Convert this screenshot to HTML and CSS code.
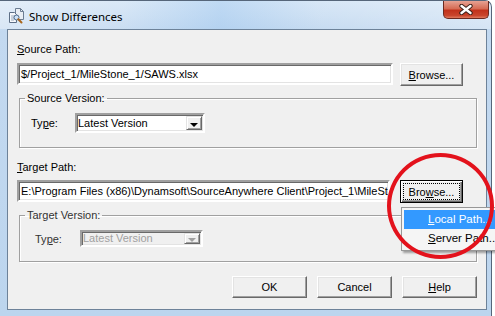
FILE: index.html
```html
<!DOCTYPE html>
<html lang="en">
<head>
  <meta charset="UTF-8">
  <meta name="viewport" content="width=device-width, initial-scale=1.0">
  <title>Show Differences</title>
  <link rel="stylesheet" href="styles.css">
</head>
<body>
  <div class="window">
    <div class="titlebar">
      <svg class="app-icon" width="16" height="16" viewBox="0 0 16 16">
        <!-- back document -->
        <path d="M7.5 0.5h5l3 3v8h-8z" fill="#e9eef4" stroke="#6c7d92"/>
        <path d="M12.5 0.5v3h3" fill="none" stroke="#6c7d92"/>
        <!-- front document -->
        <path d="M1.5 4.5h5l2 2v8h-7z" fill="#f6f8fb" stroke="#5d6f86"/>
        <path d="M3 8h4M3 10h4M3 12h3" stroke="#9aaabd"/>
        <!-- magnifier -->
        <circle cx="8.5" cy="9.5" r="2.5" fill="#cfe3f7" stroke="#4d6b8c"/>
        <path d="M10.3 11.3l3.2 3.2" stroke="#a8661c" stroke-width="2" stroke-linecap="round"/>
      </svg>
      <span class="title">Show Differences</span>
      <div class="close-btn">
        <svg width="14" height="11" viewBox="0 0 14 11">
          <path d="M2.5 2l9 7M11.5 2l-9 7" stroke="#3b2019" stroke-width="4.4" stroke-linecap="round"/>
          <path d="M2.5 2l9 7M11.5 2l-9 7" stroke="#ffffff" stroke-width="2.4" stroke-linecap="round"/>
        </svg>
      </div>
    </div>

    <div class="client">
      <div class="field-label"><u>S</u>ource Path:</div>
      <div class="path-row">
        <div class="textbox source-box">$/Project_1/MileStone_1/SAWS.xlsx</div>
        <button class="btn browse-btn"><u>B</u>rowse...</button>
      </div>

      <fieldset class="group source-group">
        <legend>Source Version:</legend>
        <div class="type-row">
          <span class="type-label">Ty<u>p</u>e:</span>
          <div class="combo">
            <span class="combo-text">Latest Version</span>
            <span class="combo-arrow"></span>
          </div>
        </div>
      </fieldset>

      <div class="field-label target-label"><u>T</u>arget Path:</div>
      <div class="path-row target-row">
        <div class="textbox target-box">E:\Program Files (x86)\Dynamsoft\SourceAnywhere Client\Project_1\MileStone_1\SAWS.xlsx</div>
        <button class="btn browse-btn default-btn"><span class="focus-ring">Bro<u>w</u>se...</span></button>
      </div>

      <fieldset class="group target-group disabled">
        <legend>Target Version:</legend>
        <div class="type-row">
          <span class="type-label">Ty<u>p</u>e:</span>
          <div class="combo">
            <span class="combo-text">Latest Version</span>
            <span class="combo-arrow"></span>
          </div>
        </div>
      </fieldset>

      <div class="dialog-buttons">
        <button class="btn dialog-btn">OK</button>
        <button class="btn dialog-btn">Cancel</button>
        <button class="btn dialog-btn"><u>H</u>elp</button>
      </div>
    </div>

    <!-- Browse dropdown menu -->
    <div class="popup-menu">
      <div class="menu-item active"><u>L</u>ocal Path...</div>
      <div class="menu-item"><u>S</u>erver Path...</div>
    </div>

    <!-- red callout ring -->
    <div class="callout"></div>
  </div>
</body>
</html>
```

FILE: styles.css
```css
html,
body {
  margin: 0;
  padding: 0;
  overflow: hidden;
  background-color: #fff;
}

body {
  width: 495px;
  height: 316px;
  font-family: "Liberation Sans", Arial, sans-serif;
  font-size: 11px;
  color: #000;
}

.window {
  position: relative;
  width: 492px;
  height: 317px;
  box-sizing: border-box;
  border-top: 1px solid #56667a;
  border-right: 1px solid #56667a;
  border-radius: 0 7px 0 0;
  background: linear-gradient(180deg, #d6e6f6 0, #c3d9f0 30px, #bcd5ee 100%);
}

.titlebar {
  display: flex;
  align-items: center;
  height: 28px;
  padding-left: 8px;
  background: linear-gradient(90deg, rgba(255, 255, 255, 0.35) 0, rgba(255, 255, 255, 0.1) 25%, rgba(150, 195, 240, 0.35) 45%, rgba(255, 255, 255, 0.05) 65%, rgba(255, 255, 255, 0.3) 100%);
  border-radius: 0 7px 0 0;
}

.app-icon {
  flex: none;
  margin-top: 2px;
}

.title {
  margin-left: 5px;
  margin-top: 2px;
  font-family: "Noto Sans", "Open Sans", sans-serif;
  font-size: 11.5px;
  color: #000;
}

.close-btn {
  align-self: flex-start;
  margin-left: auto;
  margin-right: 2px;
  width: 44px;
  height: 17px;
  display: flex;
  align-items: center;
  justify-content: center;
  border: 1px solid #6b2a20;
  border-top: none;
  border-radius: 0 0 5px 5px;
  background: linear-gradient(180deg, #e6a293 0, #d66c55 45%, #c1321b 55%, #c9452c 85%, #e07a5e 100%);
}

.client {
  box-sizing: border-box;
  height: 281px;
  margin: 0 4px 0 7px;
  padding: 12px 9px 0 9px;
  border: 1px solid #6d8299;
  background-color: #f0f0f0;
}

.field-label {
  height: 14px;
  line-height: 14px;
}

.target-label {
  margin-top: 12px;
}

.path-row {
  display: flex;
  align-items: flex-start;
  gap: 7px;
  margin-top: 7px;
  height: 23px;
}

.target-row {
  margin-top: 6px;
}

.textbox {
  box-sizing: border-box;
  height: 22px;
  padding: 0 2px;
  line-height: 18px;
  white-space: nowrap;
  overflow: hidden;
  background-color: #fff;
  border: 2px solid;
  border-color: #a0a0a0 #fff #fff #a0a0a0;
  box-shadow: inset 1px 1px 0 #696969, inset -1px -1px 0 #e3e3e3;
}

.source-box {
  width: 376px;
}

.target-box {
  width: 373px;
  margin-right: 3px;
}

.btn {
  box-sizing: border-box;
  padding: 0;
  font-family: "Liberation Sans", Arial, sans-serif;
  font-size: 11px;
  color: #000;
  background-color: #f0f0f0;
  border: 1px solid;
  border-color: #fff #696969 #696969 #fff;
  box-shadow: inset -1px -1px 0 #a0a0a0, inset 1px 1px 0 #e3e3e3;
}

.browse-btn {
  width: 63px;
  height: 23px;
}

.default-btn {
  border: 1px solid #000;
  box-shadow: inset 1px 1px 0 #fff, inset -1px -1px 0 #696969, inset -2px -2px 0 #a0a0a0;
  display: flex;
  padding: 3px;
}

.focus-ring {
  flex: 1;
  display: flex;
  align-items: center;
  justify-content: center;
  outline: 1px dotted #000;
}

.group {
  margin: 5px 0 0 2px;
  padding: 0 0 14px 0;
  min-width: 0;
  border: 1px solid #a0a0a0;
  box-shadow: inset 1px 1px 0 #fff, 1px 1px 0 #fff;
}

.group legend {
  margin-left: 5px;
  padding: 0 2px;
  line-height: 14px;
}

.type-row {
  display: flex;
  align-items: center;
  margin-top: 8px;
}

.source-group .type-row {
  padding-left: 11px;
}

.target-group .type-row {
  padding-left: 15px;
}

.type-label {
  width: 44px;
}

.target-group .type-label {
  width: 45px;
}

.combo {
  box-sizing: border-box;
  display: flex;
  align-items: stretch;
  width: 130px;
  height: 20px;
  background-color: #fff;
  border: 2px solid;
  border-color: #a0a0a0 #fff #fff #a0a0a0;
  box-shadow: inset 1px 1px 0 #696969, inset -1px -1px 0 #e3e3e3;
}

.combo-text {
  flex: 1;
  padding: 1px 0 0 1px;
  line-height: 15px;
}

.combo-arrow {
  position: relative;
  width: 14px;
  margin: 1px 1px 1px 0;
  background-color: #f0f0f0;
  border: 1px solid;
  border-color: #e3e3e3 #696969 #696969 #e3e3e3;
  box-shadow: inset 1px 1px 0 #fff, inset -1px -1px 0 #a0a0a0;
}

.combo-arrow::after {
  content: "";
  position: absolute;
  left: 3px;
  top: 6px;
  border-left: 4px solid transparent;
  border-right: 4px solid transparent;
  border-top: 4px solid #000;
}

.disabled legend,
.disabled .type-label {
  color: #333;
}

.disabled .combo {
  width: 123px;
  height: 17px;
  background-color: #f0f0f0;
}

.disabled .combo-text {
  padding-top: 0;
  line-height: 13px;
  color: #a0a0a0;
}

.disabled .combo-arrow {
  width: 14px;
}

.disabled .combo-arrow::after {
  top: 4px;
  border-top-color: #a0a0a0;
}

.dialog-buttons {
  display: flex;
  justify-content: flex-end;
  gap: 10px;
  margin-top: 14px;
}

.dialog-btn {
  width: 75px;
  height: 22px;
}

.popup-menu {
  position: absolute;
  left: 401px;
  top: 206px;
  width: 110px;
  padding: 2px;
  background-color: #f5f5f5;
  border: 1px solid #979797;
  box-shadow: 2px 2px 2px rgba(0, 0, 0, 0.35);
}

.menu-item {
  height: 19px;
  line-height: 19px;
  padding-left: 24px;
  font-size: 11.5px;
}

.menu-item.active {
  background-color: #3399ff;
  color: #fff;
}

.callout {
  position: absolute;
  left: 387px;
  top: 152px;
  width: 107px;
  height: 106px;
  box-sizing: border-box;
  border: 4px solid #e3121c;
  border-radius: 50%;
}
```
